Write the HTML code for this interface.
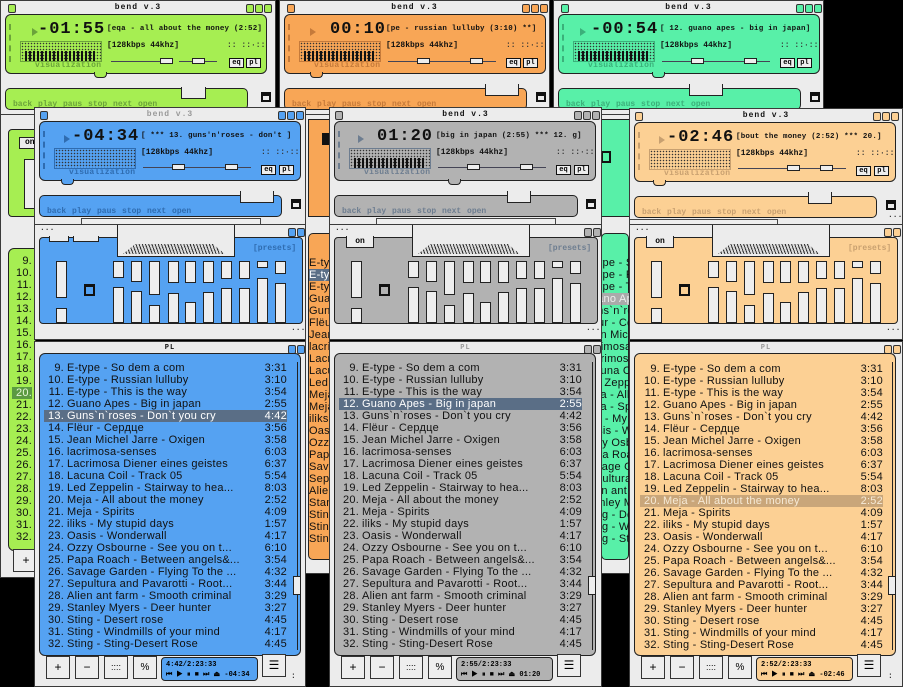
<!DOCTYPE html>
<html><head><meta charset="utf-8"><style>
*{margin:0;padding:0;box-sizing:border-box}
body{width:903px;height:686px;background:#000;position:relative;overflow:hidden;font-family:"Liberation Mono",monospace}
.w{position:absolute;background:#ececec;border:1px solid #3a3a3a;overflow:hidden}
.w>div{position:absolute}
.g{--c:#a6ee52;--d:#6ba33a}.o{--c:#f8a656;--d:#c57a3a}.t{--c:#58f0a8;--d:#3bb07a}
.b{--c:#55a2f2;--d:#2f6cb0}.y{--c:#b2b2b2;--d:#6d7d90}.p{--c:#fcd094;--d:#c8a070}
.sq{top:3px;width:8px;height:9px;border:1px solid #333;background:var(--c);border-radius:2px}
.ttl{left:0;right:0;top:2px;text-align:center;font:bold 8px "Liberation Mono",monospace;letter-spacing:1px;color:#111}
.pan{left:4px;top:13px;width:262px;height:60px;background:var(--c);border:1px solid #222;border-radius:6px}
.notch{left:26px;top:71px;width:13px;height:6px;background:var(--c);border:1px solid #222;border-top:none;border-radius:0 0 4px 4px}
.ind{left:8px;top:23px;width:3px;height:38px;border-left:2px dashed var(--d)}
.tri{left:28px;top:27px;width:0;height:0;border-left:6px solid var(--d);border-top:4px solid transparent;border-bottom:4px solid transparent}
.tm{left:37px;top:19px;font:bold 17px "Liberation Mono",monospace;letter-spacing:1px;color:#111}
.song{left:106px;top:24px;font:bold 7.5px "Liberation Mono",monospace;letter-spacing:.2px;color:#111;white-space:nowrap}
.kb{left:106px;top:40px;font:bold 8px "Liberation Mono",monospace;color:#111;white-space:nowrap}
.vis{left:19px;top:40px;width:82px;height:21px;border:1px solid var(--d);background:radial-gradient(circle,#333 .6px,transparent .9px) 0 0/3px 3px}
.bars{left:24px;top:50px;width:72px;height:10px;background:repeating-linear-gradient(90deg,#111 0 2px,transparent 2px 4px)}
.vl{left:34px;top:60px;font:bold 8px "Liberation Mono",monospace;color:var(--d);letter-spacing:.3px}
.ln{height:1px;background:#445}
.hd{width:13px;height:6px;background:#eee;border:1px solid #222}
.eqb,.plb{top:57px;width:15px;height:10px;border:1px solid #111;background:#eee;font:bold 7px "Liberation Mono";text-align:center;line-height:8px}
.dots{left:226px;top:40px;font:bold 8px "Liberation Mono";color:#333}
.bar{left:4px;top:87px;width:243px;height:22px;background:var(--c);border:1px solid #222;border-radius:5px}
.bump{left:205px;top:83px;width:34px;height:12px;background:#ececec;border:1px solid #222;border-top:none}
.bt{left:12px;top:99px;font:bold 8px "Liberation Mono";color:var(--d);word-spacing:1px;white-space:nowrap}
.bb{left:256px;top:91px;width:10px;height:10px;border:2px solid #111;border-top-width:4px}
.ell{font:bold 8px "Liberation Mono";color:#333}
.seek{left:46px;top:110px;width:180px;height:8px;background:#eee;border:1px solid #444}
.ep{left:4px;top:12px;width:264px;height:87px;background:var(--c);border:1px solid #222;border-radius:4px}
.cut{left:82px;top:-1px;width:118px;height:33px;background:#ececec;border:1px solid #222;border-top:none}
.gfx{left:88px;top:19px;width:102px;height:10px;background:repeating-linear-gradient(70deg,#333 0 1px,#ddd 1px 3px);clip-path:polygon(12% 0,88% 0,100% 100%,0 100%)}
.on{left:16px;top:11px;width:28px;height:12px;background:#ececec;border:1px solid #222;border-top:none;font:bold 8px "Liberation Mono";text-align:center;line-height:11px}
.pre{left:218px;top:19px;font:bold 8px "Liberation Mono";color:var(--d)}
.s{width:11px;background:#eee;border:1px solid #222}
.bq{left:49px;top:59px;width:11px;height:12px;border:2px solid #111;border-top-width:3px}
.pp{left:4px;top:11px;width:262px;height:303px;background:var(--c);border:1px solid #222;border-radius:6px}
.rows{left:9px;top:20px;width:243px;font:11px "Liberation Sans",sans-serif;letter-spacing:.25px;color:#111}
.rows div{height:12px;line-height:12px;white-space:nowrap;position:relative;overflow:hidden}
.rows i{display:inline-block;width:20px;text-align:right;font-style:normal;margin-right:3px}
.rows b{position:absolute;right:0;top:0;font-weight:normal;background:inherit;padding-left:4px}
.hl{background:#5a6e86;color:#fff}
.sc{left:262px;top:20px;width:1px;height:288px;background:#222}
.th{left:258px;top:234px;width:8px;height:19px;background:#eee;border:1px solid #222}
.btn{top:314px;width:24px;height:23px;background:#eee;border:1px solid #333;font:12px "Liberation Sans";text-align:center;line-height:21px}
.info{left:126px;top:315px;width:97px;height:24px;background:var(--c);border:1px solid #222;border-radius:4px;font:bold 7px "Liberation Mono";padding:2px 4px;line-height:10px;white-space:nowrap}
.strip{position:absolute;overflow:hidden;background:#ececec;border:1px solid #3a3a3a}
.strip>div{position:absolute}
</style></head><body>

<div class="w g" style="left:0;top:0;width:276px;height:116px">
<div class="sq" style="left:7px"></div><div class="ttl">bend v.3</div><div class="sq" style="left:245px"></div><div class="sq" style="left:254px"></div><div class="sq" style="left:263px"></div>
<div class="pan"></div><div class="notch" style="left:93px"></div><div class="ind"></div><div class="tri" style="left:31px"></div>
<div class="tm">-01:55</div><div class="song">[eqa - all about the money (2:52]</div><div class="kb">[128kbps  44khz]</div>
<div class="vis"></div><div class="bars"></div><div class="vl">visualization</div>
<div class="ln" style="left:110px;top:60px;width:60px"></div><div class="hd" style="left:159px;top:57px"></div>
<div class="ln" style="left:178px;top:60px;width:38px"></div><div class="hd" style="left:191px;top:57px"></div>
<div class="eqb" style="left:228px">eq</div><div class="plb" style="left:245px">pl</div><div class="dots">::  ::·::</div>
<div class="bar" style="width:243px"></div><div class="bump" style="left:180px;top:86px;width:25px"></div><div class="bt">back play paus stop next  open</div><div class="bb" style="left:260px"></div>
</div>
<div class="w o" style="left:279px;top:0;width:271px;height:116px">
<div class="sq" style="left:7px"></div><div class="ttl">bend v.3</div><div class="sq" style="left:242px"></div><div class="sq" style="left:251px"></div><div class="sq" style="left:260px"></div>
<div class="pan"></div><div class="notch" style="left:30px"></div><div class="ind"></div><div class="tri" style="left:30px"></div>
<div class="tm" style="left:50px">00:10</div><div class="song">[pe - russian lulluby (3:10) **]</div><div class="kb">[128kbps  44khz]</div>
<div class="vis"></div><div class="bars"></div><div class="vl">visualization</div>
<div class="ln" style="left:108px;top:60px;width:70px"></div><div class="hd" style="left:137px;top:57px"></div>
<div class="ln" style="left:178px;top:60px;width:38px"></div><div class="hd" style="left:190px;top:57px"></div>
<div class="eqb" style="left:226px">eq</div><div class="plb" style="left:243px">pl</div><div class="dots">::  ::·::</div>
<div class="bar"></div><div class="bump"></div><div class="bt">back play paus stop next  open</div><div class="bb"></div>
</div>
<div class="w t" style="left:553px;top:0;width:271px;height:116px">
<div class="sq" style="left:7px"></div><div class="ttl">bend v.3</div><div class="sq" style="left:242px"></div><div class="sq" style="left:251px"></div><div class="sq" style="left:260px"></div>
<div class="pan"></div><div class="notch" style="left:98px"></div><div class="ind"></div><div class="tri" style="left:26px"></div>
<div class="tm">-00:54</div><div class="song">[ 12. guano apes - big in japan]</div><div class="kb">[128kbps  44khz]</div>
<div class="vis"></div><div class="bars"></div><div class="vl">visualization</div>
<div class="ln" style="left:108px;top:60px;width:70px"></div><div class="hd" style="left:137px;top:57px"></div>
<div class="ln" style="left:178px;top:60px;width:38px"></div><div class="hd" style="left:190px;top:57px"></div>
<div class="eqb" style="left:226px">eq</div><div class="plb" style="left:243px">pl</div><div class="dots">::  ::·::</div>
<div class="bar"></div><div class="bump" style="left:135px"></div><div class="bt">back play paus stop next  open</div><div class="bb"></div>
</div>

<div class="strip g" style="left:0;top:114px;width:36px;height:464px">
<div style="left:7px;top:14px;width:40px;height:88px;background:var(--c);border:1px solid #222;border-radius:4px"></div>
<div style="left:18px;top:22px;width:30px;height:12px;background:#ececec;border:1px solid #222;font:bold 8px 'Liberation Mono';padding-left:5px">on</div>
<div style="left:23px;top:44px;width:20px;height:50px;background:#eee;border:1px solid #222"></div>
<div style="left:7px;top:133px;width:40px;height:303px;background:var(--c);border:1px solid #222;border-radius:6px"></div>
<div style="left:5px;top:140px;font:11px 'Liberation Sans',sans-serif;letter-spacing:.25px;line-height:12px;text-align:right;width:26px;color:#111">9.<br>10.<br>11.<br>12.<br>13.<br>14.<br>15.<br>16.<br>17.<br>18.<br>19.<br><span style="background:#5b9a42;color:#e8f8d8;padding-left:4px">20.</span><br>21.<br>22.<br>23.<br>24.<br>25.<br>26.<br>27.<br>28.<br>29.<br>30.<br>31.<br>32.</div>
<div style="left:12px;top:434px;width:26px;height:23px;background:#eee;border:1px solid #333;font:12px 'Liberation Sans';text-align:center;line-height:21px">+</div>
</div>
<div class="strip o" style="left:305px;top:114px;width:25px;height:460px">
<div style="left:2px;top:4px;width:40px;height:98px;background:var(--c);border:1px solid #222"></div>
<div style="left:16px;top:18px;width:12px;height:12px;background:#111"></div>
<div style="left:2px;top:118px;width:40px;height:327px;background:var(--c);border:1px solid #222;border-radius:5px"></div>
<div style="left:3px;top:142px;font:11px 'Liberation Sans',sans-serif;letter-spacing:.25px;line-height:12px;white-space:nowrap;color:#111">E-type<br><span style="background:#5a6e86;color:#fff">E-type</span><br>E-type<br>Guano<br>Guns<br>Flëur<br>Jean<br>lacrimosa<br>Lacrimosa<br>Lacuna<br>Led<br>Meja<br>Meja<br>iliks<br>Oasis<br>Ozzy<br>Papa<br>Savage<br>Sepultura<br>Alien<br>Stanley<br>Sting<br>Sting<br>Sting</div>
</div>
<div class="strip t" style="left:600px;top:114px;width:30px;height:460px">
<div style="left:0;top:4px;width:40px;height:98px;background:var(--c);border:1px solid #222"></div>
<div style="left:0;top:36px;width:10px;height:12px;border:2px solid #111"></div>
<div style="left:0;top:118px;width:28px;height:327px;background:var(--c);border:1px solid #222;border-radius:5px"></div>
<div style="left:-19px;top:142px;font:11px 'Liberation Sans',sans-serif;letter-spacing:.25px;line-height:12px;white-space:nowrap;color:#111">E-type - So<br>E-type - Ru<br>E-type - Th<br><span style="background:#aaa;color:#eee">Guano Ape</span><br>Guns`n`ro<br>Flëur - Се<br>Jean Mich<br>lacrimosa<br>Lacrimosa<br>Lacuna Co<br>Led Zeppe<br>Meja - All<br>Meja - Sp<br>iliks - My<br>Oasis - W<br>Ozzy Osbo<br>Papa Roac<br>Savage Ga<br>Sepultura<br>Alien ant<br>Stanley M<br>Sting - De<br>Sting - Wi<br>Sting - St</div>
</div>

<div class="w b" style="left:34px;top:107px;width:272px;height:118px">
<div class="sq" style="left:5px"></div><div class="ttl" style="color:#999">bend v.3</div><div class="sq" style="left:243px"></div><div class="sq" style="left:252px"></div><div class="sq" style="left:261px"></div>
<div class="pan"></div><div class="notch" style="left:26px"></div><div class="ind"></div><div class="tri" style="left:29px"></div>
<div class="tm">-04:34</div><div class="song">[ ***  13. guns'n'roses - don't ]</div><div class="kb">[128kbps  44khz]</div>
<div class="vis"></div><div class="vl">visualization</div>
<div class="ln" style="left:108px;top:59px;width:70px"></div><div class="hd" style="left:137px;top:56px"></div>
<div class="ln" style="left:176px;top:59px;width:40px"></div><div class="hd" style="left:190px;top:56px"></div>
<div class="eqb" style="left:226px">eq</div><div class="plb" style="left:244px">pl</div><div class="dots">::  ::·::</div>
<div class="bar"></div><div class="bump"></div><div class="bt">back play paus stop next  open</div><div class="bb"></div>
<div class="seek"></div>
</div>
<div class="w y" style="left:329px;top:107px;width:273px;height:118px">
<div class="sq" style="left:5px"></div><div class="ttl">bend v.3</div><div class="sq" style="left:244px"></div><div class="sq" style="left:253px"></div><div class="sq" style="left:262px"></div>
<div class="pan"></div><div class="notch" style="left:118px"></div><div class="ind"></div><div class="tri" style="left:28px"></div>
<div class="tm" style="left:47px">01:20</div><div class="song">[big in japan (2:55)  ***  12. g]</div><div class="kb">[128kbps  44khz]</div>
<div class="vis"></div><div class="bars"></div><div class="vl">visualization</div>
<div class="ln" style="left:108px;top:59px;width:70px"></div><div class="hd" style="left:137px;top:56px"></div>
<div class="ln" style="left:176px;top:59px;width:40px"></div><div class="hd" style="left:190px;top:56px"></div>
<div class="eqb" style="left:226px">eq</div><div class="plb" style="left:244px">pl</div><div class="dots">::  ::·::</div>
<div class="bar" style="width:244px"></div><div class="bump" style="left:177px;width:24px"></div><div class="bt">back play paus stop next  open</div><div class="bb"></div>
<div class="seek"></div>
</div>
<div class="w p" style="left:629px;top:108px;width:274px;height:117px">
<div class="sq" style="left:5px"></div><div class="ttl">bend v.3</div><div class="sq" style="left:243px"></div><div class="sq" style="left:252px"></div><div class="sq" style="left:261px"></div>
<div class="pan"></div><div class="notch" style="left:23px"></div><div class="ind"></div><div class="tri" style="left:29px"></div>
<div class="tm">-02:46</div><div class="song">[bout the money (2:52)  ***  20.]</div><div class="kb">[128kbps  44khz]</div>
<div class="vis"></div><div class="vl">visualization</div>
<div class="ln" style="left:108px;top:59px;width:70px"></div><div class="hd" style="left:157px;top:56px"></div>
<div class="ln" style="left:176px;top:59px;width:40px"></div><div class="hd" style="left:190px;top:56px"></div>
<div class="eqb" style="left:226px">eq</div><div class="plb" style="left:244px">pl</div><div class="dots">::  ::·::</div>
<div class="bar"></div><div class="bump" style="left:178px;width:24px"></div><div class="bt">back play paus stop next  open</div><div class="bb"></div>
<div class="ell" style="left:258px;top:102px">...</div>
<div class="seek" style="left:-2px;top:110px;width:150px"></div>
</div>

<div class="w b" style="left:34px;top:224px;width:272px;height:116px">
<div class="ell" style="left:5px;top:-1px">...</div><div class="ttl" style="color:#999;font-size:7px">EQ</div><div class="sq" style="left:253px"></div><div class="sq" style="left:262px"></div>
<div class="ep"></div><div class="cut"></div><div class="gfx"></div>
<div style="left:14px;top:11px;width:20px;height:6px;background:#ececec;border:1px solid #222;border-top:none"></div>
<div style="left:38px;top:11px;width:26px;height:6px;background:#ececec;border:1px solid #222;border-top:none"></div>
<div class="pre">[presets]</div>
<div class="s" style="left:21px;top:36px;height:37px"></div><div class="s" style="left:21px;top:83px;height:15px"></div>
<div class="bq"></div>
<div class="s" style="left:78px;top:36px;height:17px"></div><div class="s" style="left:78px;top:62px;height:36px"></div>
<div class="s" style="left:96px;top:36px;height:21px"></div><div class="s" style="left:96px;top:66px;height:32px"></div>
<div class="s" style="left:114px;top:36px;height:34px"></div><div class="s" style="left:114px;top:80px;height:18px"></div>
<div class="s" style="left:133px;top:36px;height:22px"></div><div class="s" style="left:133px;top:68px;height:30px"></div>
<div class="s" style="left:150px;top:36px;height:22px"></div><div class="s" style="left:150px;top:77px;height:21px"></div>
<div class="s" style="left:168px;top:36px;height:22px"></div><div class="s" style="left:168px;top:67px;height:31px"></div>
<div class="s" style="left:186px;top:36px;height:18px"></div><div class="s" style="left:186px;top:63px;height:35px"></div>
<div class="s" style="left:204px;top:36px;height:18px"></div><div class="s" style="left:204px;top:63px;height:35px"></div>
<div class="s" style="left:222px;top:36px;height:7px"></div><div class="s" style="left:222px;top:53px;height:45px"></div>
<div class="s" style="left:240px;top:36px;height:13px"></div><div class="s" style="left:240px;top:58px;height:40px"></div>
<div class="ell" style="left:256px;top:99px">...</div>
</div>
<div class="w y" style="left:329px;top:224px;width:273px;height:116px">
<div class="ell" style="left:5px;top:-1px">...</div><div class="ttl" style="color:#999;font-size:7px">EQ</div><div class="sq" style="left:254px"></div><div class="sq" style="left:263px"></div>
<div class="ep"></div><div class="cut"></div><div class="gfx"></div><div class="on">on</div>
<div class="pre">[presets]</div>
<div class="s" style="left:21px;top:36px;height:37px"></div><div class="s" style="left:21px;top:83px;height:15px"></div>
<div class="bq"></div>
<div class="s" style="left:78px;top:36px;height:17px"></div><div class="s" style="left:78px;top:62px;height:36px"></div>
<div class="s" style="left:96px;top:36px;height:21px"></div><div class="s" style="left:96px;top:66px;height:32px"></div>
<div class="s" style="left:114px;top:36px;height:34px"></div><div class="s" style="left:114px;top:80px;height:18px"></div>
<div class="s" style="left:133px;top:36px;height:22px"></div><div class="s" style="left:133px;top:68px;height:30px"></div>
<div class="s" style="left:150px;top:36px;height:22px"></div><div class="s" style="left:150px;top:77px;height:21px"></div>
<div class="s" style="left:168px;top:36px;height:22px"></div><div class="s" style="left:168px;top:67px;height:31px"></div>
<div class="s" style="left:186px;top:36px;height:18px"></div><div class="s" style="left:186px;top:63px;height:35px"></div>
<div class="s" style="left:204px;top:36px;height:18px"></div><div class="s" style="left:204px;top:63px;height:35px"></div>
<div class="s" style="left:222px;top:36px;height:7px"></div><div class="s" style="left:222px;top:53px;height:45px"></div>
<div class="s" style="left:240px;top:36px;height:13px"></div><div class="s" style="left:240px;top:58px;height:40px"></div>
<div class="ell" style="left:256px;top:99px">...</div>
</div>
<div class="w p" style="left:629px;top:224px;width:274px;height:116px">
<div class="ell" style="left:5px;top:-1px">...</div><div class="ttl" style="color:#999;font-size:7px">EQ</div><div class="sq" style="left:254px"></div><div class="sq" style="left:263px"></div>
<div class="ep"></div><div class="cut"></div><div class="gfx"></div><div class="on">on</div>
<div class="pre">[presets]</div>
<div class="s" style="left:21px;top:36px;height:37px"></div><div class="s" style="left:21px;top:83px;height:15px"></div>
<div class="bq"></div>
<div class="s" style="left:78px;top:36px;height:17px"></div><div class="s" style="left:78px;top:62px;height:36px"></div>
<div class="s" style="left:96px;top:36px;height:21px"></div><div class="s" style="left:96px;top:66px;height:32px"></div>
<div class="s" style="left:114px;top:36px;height:34px"></div><div class="s" style="left:114px;top:80px;height:18px"></div>
<div class="s" style="left:133px;top:36px;height:22px"></div><div class="s" style="left:133px;top:68px;height:30px"></div>
<div class="s" style="left:150px;top:36px;height:22px"></div><div class="s" style="left:150px;top:77px;height:21px"></div>
<div class="s" style="left:168px;top:36px;height:22px"></div><div class="s" style="left:168px;top:67px;height:31px"></div>
<div class="s" style="left:186px;top:36px;height:18px"></div><div class="s" style="left:186px;top:63px;height:35px"></div>
<div class="s" style="left:204px;top:36px;height:18px"></div><div class="s" style="left:204px;top:63px;height:35px"></div>
<div class="s" style="left:222px;top:36px;height:7px"></div><div class="s" style="left:222px;top:53px;height:45px"></div>
<div class="s" style="left:240px;top:36px;height:13px"></div><div class="s" style="left:240px;top:58px;height:40px"></div>
<div class="ell" style="left:256px;top:99px">...</div>
</div>

<div class="w b" style="left:34px;top:341px;width:272px;height:346px">
<div class="ttl" style="font-size:7px">PL</div><div class="sq" style="left:253px"></div><div class="sq" style="left:262px"></div>
<div class="pp"></div>
<div class="rows">
<div><i>9.</i>E-type - So dem a com<b>3:31</b></div>
<div><i>10.</i>E-type - Russian lulluby<b>3:10</b></div>
<div><i>11.</i>E-type - This is the way<b>3:54</b></div>
<div><i>12.</i>Guano Apes - Big in japan<b>2:55</b></div>
<div class="hl"><i>13.</i>Guns`n`roses - Don`t you cry<b>4:42</b></div>
<div><i>14.</i>Flëur - Сердце<b>3:56</b></div>
<div><i>15.</i>Jean Michel Jarre - Oxigen<b>3:58</b></div>
<div><i>16.</i>lacrimosa-senses<b>6:03</b></div>
<div><i>17.</i>Lacrimosa Diener eines geistes<b>6:37</b></div>
<div><i>18.</i>Lacuna Coil - Track 05<b>5:54</b></div>
<div><i>19.</i>Led Zeppelin - Stairway to hea...<b>8:03</b></div>
<div><i>20.</i>Meja - All about the money<b>2:52</b></div>
<div><i>21.</i>Meja - Spirits<b>4:09</b></div>
<div><i>22.</i>iliks - My stupid days<b>1:57</b></div>
<div><i>23.</i>Oasis - Wonderwall<b>4:17</b></div>
<div><i>24.</i>Ozzy Osbourne - See you on t...<b>6:10</b></div>
<div><i>25.</i>Papa Roach - Between angels&amp;...<b>3:54</b></div>
<div><i>26.</i>Savage Garden - Flying To the ...<b>4:32</b></div>
<div><i>27.</i>Sepultura and Pavarotti - Root...<b>3:44</b></div>
<div><i>28.</i>Alien ant farm - Smooth criminal<b>3:29</b></div>
<div><i>29.</i>Stanley Myers - Deer hunter<b>3:27</b></div>
<div><i>30.</i>Sting - Desert rose<b>4:45</b></div>
<div><i>31.</i>Sting - Windmills of your mind<b>4:17</b></div>
<div><i>32.</i>Sting - Sting-Desert Rose<b>4:45</b></div>
</div>
<div class="sc"></div><div class="th"></div>
<div class="btn" style="left:11px">+</div><div class="btn" style="left:40px">−</div><div class="btn" style="left:69px;font-size:9px">::::</div><div class="btn" style="left:98px;font-size:10px">%</div>
<div class="info">4:42/2:23:33<br>⏮ ▶ ⏸ ■ ⏭ ⏏  -04:34</div>
<div class="btn" style="left:227px;top:312px">☰</div>
<div class="ell" style="left:256px;top:330px">:</div>
</div>
<div class="w y" style="left:329px;top:341px;width:273px;height:346px">
<div class="ttl" style="font-size:7px;color:#999">PL</div><div class="sq" style="left:254px"></div><div class="sq" style="left:263px"></div>
<div class="pp"></div>
<div class="rows">
<div><i>9.</i>E-type - So dem a com<b>3:31</b></div>
<div><i>10.</i>E-type - Russian lulluby<b>3:10</b></div>
<div><i>11.</i>E-type - This is the way<b>3:54</b></div>
<div class="hl"><i>12.</i>Guano Apes - Big in japan<b>2:55</b></div>
<div><i>13.</i>Guns`n`roses - Don`t you cry<b>4:42</b></div>
<div><i>14.</i>Flëur - Сердце<b>3:56</b></div>
<div><i>15.</i>Jean Michel Jarre - Oxigen<b>3:58</b></div>
<div><i>16.</i>lacrimosa-senses<b>6:03</b></div>
<div><i>17.</i>Lacrimosa Diener eines geistes<b>6:37</b></div>
<div><i>18.</i>Lacuna Coil - Track 05<b>5:54</b></div>
<div><i>19.</i>Led Zeppelin - Stairway to hea...<b>8:03</b></div>
<div><i>20.</i>Meja - All about the money<b>2:52</b></div>
<div><i>21.</i>Meja - Spirits<b>4:09</b></div>
<div><i>22.</i>iliks - My stupid days<b>1:57</b></div>
<div><i>23.</i>Oasis - Wonderwall<b>4:17</b></div>
<div><i>24.</i>Ozzy Osbourne - See you on t...<b>6:10</b></div>
<div><i>25.</i>Papa Roach - Between angels&amp;...<b>3:54</b></div>
<div><i>26.</i>Savage Garden - Flying To the ...<b>4:32</b></div>
<div><i>27.</i>Sepultura and Pavarotti - Root...<b>3:44</b></div>
<div><i>28.</i>Alien ant farm - Smooth criminal<b>3:29</b></div>
<div><i>29.</i>Stanley Myers - Deer hunter<b>3:27</b></div>
<div><i>30.</i>Sting - Desert rose<b>4:45</b></div>
<div><i>31.</i>Sting - Windmills of your mind<b>4:17</b></div>
<div><i>32.</i>Sting - Sting-Desert Rose<b>4:45</b></div>
</div>
<div class="sc"></div><div class="th"></div>
<div class="btn" style="left:11px">+</div><div class="btn" style="left:40px">−</div><div class="btn" style="left:69px;font-size:9px">::::</div><div class="btn" style="left:98px;font-size:10px">%</div>
<div class="info">2:55/2:23:33<br>⏮ ▶ ⏸ ■ ⏭ ⏏  01:20</div>
<div class="btn" style="left:227px;top:312px">☰</div>
</div>
<div class="w p" style="left:629px;top:341px;width:274px;height:346px">
<div class="ttl" style="font-size:7px;color:#999">PL</div><div class="sq" style="left:254px"></div><div class="sq" style="left:263px"></div>
<div class="pp"></div>
<div class="rows" style="left:10px;top:21px">
<div><i>9.</i>E-type - So dem a com<b>3:31</b></div>
<div><i>10.</i>E-type - Russian lulluby<b>3:10</b></div>
<div><i>11.</i>E-type - This is the way<b>3:54</b></div>
<div><i>12.</i>Guano Apes - Big in japan<b>2:55</b></div>
<div><i>13.</i>Guns`n`roses - Don`t you cry<b>4:42</b></div>
<div><i>14.</i>Flëur - Сердце<b>3:56</b></div>
<div><i>15.</i>Jean Michel Jarre - Oxigen<b>3:58</b></div>
<div><i>16.</i>lacrimosa-senses<b>6:03</b></div>
<div><i>17.</i>Lacrimosa Diener eines geistes<b>6:37</b></div>
<div><i>18.</i>Lacuna Coil - Track 05<b>5:54</b></div>
<div><i>19.</i>Led Zeppelin - Stairway to hea...<b>8:03</b></div>
<div style="background:#c9a67a;color:#f6ead6"><i>20.</i>Meja - All about the money<b>2:52</b></div>
<div><i>21.</i>Meja - Spirits<b>4:09</b></div>
<div><i>22.</i>iliks - My stupid days<b>1:57</b></div>
<div><i>23.</i>Oasis - Wonderwall<b>4:17</b></div>
<div><i>24.</i>Ozzy Osbourne - See you on t...<b>6:10</b></div>
<div><i>25.</i>Papa Roach - Between angels&amp;...<b>3:54</b></div>
<div><i>26.</i>Savage Garden - Flying To the ...<b>4:32</b></div>
<div><i>27.</i>Sepultura and Pavarotti - Root...<b>3:44</b></div>
<div><i>28.</i>Alien ant farm - Smooth criminal<b>3:29</b></div>
<div><i>29.</i>Stanley Myers - Deer hunter<b>3:27</b></div>
<div><i>30.</i>Sting - Desert rose<b>4:45</b></div>
<div><i>31.</i>Sting - Windmills of your mind<b>4:17</b></div>
<div><i>32.</i>Sting - Sting-Desert Rose<b>4:45</b></div>
</div>
<div class="sc"></div><div class="th"></div>
<div class="btn" style="left:11px">+</div><div class="btn" style="left:40px">−</div><div class="btn" style="left:69px;font-size:9px">::::</div><div class="btn" style="left:98px;font-size:10px">%</div>
<div class="info">2:52/2:23:33<br>⏮ ▶ ⏸ ■ ⏭ ⏏  -02:46</div>
<div class="btn" style="left:227px;top:312px">☰</div>
<div class="ell" style="left:258px;top:330px">:</div>
</div>
</body></html>
